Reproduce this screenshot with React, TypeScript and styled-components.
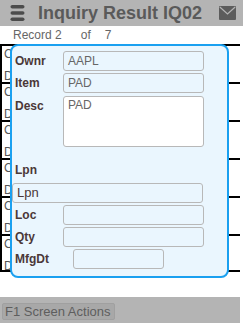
import styled, { createGlobalStyle } from "styled-components";

const GlobalStyle = createGlobalStyle`
  html, body {
    margin: 0;
    padding: 0;
    background: #ffffff;
    font-family: "Liberation Sans", Arial, sans-serif;
  }
`

const rows = [
  { c: "Cntr 000112", d: "Desc PAD" },
  { c: "Cntr 000113", d: "Desc PAD" },
  { c: "Cntr 000114", d: "Desc PAD" },
  { c: "Cntr 000115", d: "Desc PAD" },
  { c: "Cntr 000116", d: "Desc PAD" },
  { c: "Cntr 000117", d: "Desc PAD" },
]

const MenuIcon = () => (
  <svg width="15" height="17" viewBox="0 0 15 17">
    <rect x="0.5" y="0" width="14" height="3.6" rx="1.8" fill="#4c4c4c" />
    <rect x="0.5" y="6.2" width="14" height="3.6" rx="1.8" fill="#4c4c4c" />
    <rect x="0.5" y="12.4" width="14" height="3.6" rx="1.8" fill="#4c4c4c" />
  </svg>
)

const MailIcon = () => (
  <svg width="17" height="14" viewBox="0 0 17 14">
    <rect x="0" y="0" width="17" height="14" rx="1" fill="#5c5c5c" />
    <path d="M0.8 1 L8.5 8 L16.2 1" stroke="#b4b4b4" strokeWidth="1.2" fill="none" />
  </svg>
)

const App = () => {
  return (
    <>
      <GlobalStyle />
      <Page>
        <Header>
          <MenuIcon />
          <Title>Inquiry Result IQ02</Title>
          <MailIcon />
        </Header>
        <RecordBar>
          Record 2<Of>of</Of><Count>7</Count>
        </RecordBar>
        <List>
          {rows.map((r, i) => (
            <Row key={i} last={i === rows.length - 1}>
              <RowLine>{r.c}</RowLine>
              <RowLine>{r.d}</RowLine>
            </Row>
          ))}
        </List>
        <Footer>
          <ActionButton>F1 Screen Actions</ActionButton>
        </Footer>

        <Panel>
          <Field top={5}>
            <Label>Ownr</Label>
            <Input width={141}>AAPL</Input>
          </Field>
          <Field top={2}>
            <Label>Item</Label>
            <Input width={141}>PAD</Input>
          </Field>
          <Field top={3}>
            <Label>Desc</Label>
            <TextArea>PAD</TextArea>
          </Field>
          <Field top={13}>
            <Label>Lpn</Label>
          </Field>
          <Field top={3}>
            <WideInput>Lpn</WideInput>
          </Field>
          <Field top={2}>
            <Label>Loc</Label>
            <Input width={141} />
          </Field>
          <Field top={2}>
            <Label>Qty</Label>
            <Input width={141} />
          </Field>
          <Field top={2}>
            <Label>MfgDt</Label>
            <Input width={91} indent={10} />
          </Field>
        </Panel>
      </Page>
    </>
  )
}

export default App;

const Page = styled.div`
  width: 243px;
  height: 323px;
  position: relative;
  display: flex;
  flex-direction: column;
  overflow: hidden;
`
const Header = styled.div`
  height: 26px;
  background-color: #b4b4b4;
  display: flex;
  align-items: center;
  padding-left: 10px;
  box-sizing: border-box;
`
const Title = styled.div`
  font-size: 18px;
  font-weight: bold;
  color: #5a5a5a;
  margin-left: 13px;
  width: 181px;
  line-height: 26px;
  white-space: nowrap;
`
const RecordBar = styled.div`
  height: 18px;
  line-height: 18px;
  padding-left: 13px;
  font-size: 12px;
  color: #666666;
`
const Of = styled.span`
  margin-left: 19px;
`
const Count = styled.span`
  margin-left: 14px;
`
const List = styled.div`
  width: 240px;
  border-left: 2px solid #000;
  box-sizing: border-box;
`
const Row = styled.div<{ last?: boolean }>`
  height: 38px;
  border-top: 2px solid #000;
  border-bottom: ${(p) => (p.last ? "2px solid #000" : "none")};
  padding: 1px 0 0 2px;
  display: flex;
  flex-direction: column;
  gap: 8px;
  box-sizing: border-box;
`
const RowLine = styled.div`
  font-size: 12px;
  line-height: 14px;
  color: #555;
  white-space: nowrap;
`
const Footer = styled.div`
  margin-top: auto;
  width: 240px;
  height: 26px;
  background-color: #b4b4b4;
  padding: 5px 0 0 2px;
  box-sizing: border-box;
`
const ActionButton = styled.div`
  display: inline-block;
  width: 113px;
  height: 17px;
  line-height: 16px;
  background-color: #a8a8a8;
  border: 1px solid #a0a0a0;
  border-radius: 2px;
  box-sizing: border-box;
  font-size: 13px;
  color: #5e5e5e;
  padding-left: 2px;
  white-space: nowrap;
`
const Panel = styled.div`
  position: absolute;
  left: 10px;
  top: 44px;
  width: 219px;
  height: 234px;
  border: 2px solid #1aa0f0;
  border-radius: 8px;
  background-color: #eaf6fe;
  box-sizing: border-box;
  padding: 0 0 0 3px;
`
const Field = styled.div<{ top: number }>`
  display: flex;
  align-items: flex-start;
  margin-top: ${(p) => p.top}px;
`
const Label = styled.div`
  width: 48px;
  flex: none;
  font-size: 12px;
  font-weight: bold;
  color: #4b3838;
  line-height: 20px;
`
const Input = styled.div<{ width: number; indent?: number }>`
  width: ${(p) => p.width}px;
  height: 20px;
  margin-left: ${(p) => p.indent || 0}px;
  border: 1px solid #b8b8b8;
  border-radius: 3px;
  background-color: #eaf6fe;
  box-sizing: border-box;
  font-size: 12px;
  line-height: 18px;
  padding-left: 4px;
  color: #666;
`
const TextArea = styled(Input).attrs({ width: 141 })`
  height: 51px;
  background-color: #ffffff;
  line-height: 16px;
`
const WideInput = styled(Input).attrs({ width: 191 })`
  margin-left: -3px;
  color: #4b3838;
  font-size: 13px;
`
